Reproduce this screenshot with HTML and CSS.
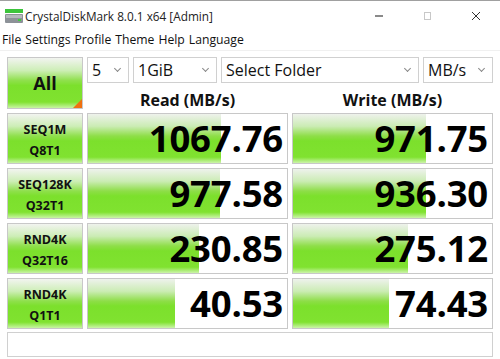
FILE: index.html
```html
<!DOCTYPE html>
<html lang="en">
  <head>
    <meta charset="UTF-8" />
    <meta name="viewport" content="width=device-width, initial-scale=1.0" />
    <title>CrystalDiskMark 8.0.1 x64 [Admin]</title>
    <link rel="stylesheet" href="styles.css">
  </head>
  <body>
    <div class="window">
      <div class="titlebar">
        <svg class="app-icon" width="18" height="14" viewBox="0 0 18 14">
          <rect x="0" y="0" width="18" height="4" fill="#3cc43c" />
          <rect x="0" y="5" width="18" height="9" rx="1" fill="#8d9298" />
          <rect x="1" y="6" width="16" height="3" fill="#b4b8bc" />
          <rect x="13" y="10" width="3" height="2" fill="#3cd03c" />
        </svg>
        <span class="title">CrystalDiskMark 8.0.1 x64 [Admin]</span>
        <div class="controls">
          <span class="ctl">
            <svg width="10" height="10" viewBox="0 0 10 10"><rect x="0" y="4" width="8" height="2" fill="#8a8a8a" /></svg>
          </span>
          <span class="ctl">
            <svg width="10" height="10" viewBox="0 0 10 10"><rect x="1.5" y="1.5" width="6" height="7" fill="none" stroke="#c8c8c8" /></svg>
          </span>
          <span class="ctl">
            <svg width="10" height="10" viewBox="0 0 10 10"><path d="M1 1 L9 9 M9 1 L1 9" stroke="#333" stroke-width="1" /></svg>
          </span>
        </div>
      </div>

      <div class="menubar">
        <span>File</span>
        <span>Settings</span>
        <span>Profile</span>
        <span>Theme</span>
        <span>Help</span>
        <span>Language</span>
      </div>

      <div class="main">
        <div class="top">
          <button class="all">All</button>
          <div class="right">
            <div class="combos">
              <div class="combo c-count">5</div>
              <div class="combo c-size">1GiB</div>
              <div class="combo c-folder">Select Folder</div>
              <div class="combo c-unit">MB/s</div>
            </div>
            <div class="heads">
              <div class="head">Read (MB/s)</div>
              <div class="head">Write (MB/s)</div>
            </div>
          </div>
        </div>

        <div class="row">
          <div class="label">SEQ1M<br />Q8T1</div>
          <div class="meter"><div class="fill" style="width: 67%"></div><span class="value">1067.76</span></div>
          <div class="meter"><div class="fill" style="width: 67%"></div><span class="value">971.75</span></div>
        </div>
        <div class="row">
          <div class="label">SEQ128K<br />Q32T1</div>
          <div class="meter"><div class="fill" style="width: 66.5%"></div><span class="value">977.58</span></div>
          <div class="meter"><div class="fill" style="width: 67%"></div><span class="value">936.30</span></div>
        </div>
        <div class="row">
          <div class="label">RND4K<br />Q32T16</div>
          <div class="meter"><div class="fill" style="width: 56%"></div><span class="value">230.85</span></div>
          <div class="meter"><div class="fill" style="width: 58%"></div><span class="value">275.12</span></div>
        </div>
        <div class="row">
          <div class="label">RND4K<br />Q1T1</div>
          <div class="meter"><div class="fill" style="width: 43.5%"></div><span class="value">40.53</span></div>
          <div class="meter"><div class="fill" style="width: 48%"></div><span class="value">74.43</span></div>
        </div>

        <div class="comment"></div>
      </div>
    </div>
  </body>
</html>
```

FILE: styles.css
```css
body {
  margin: 0;
  padding: 0;
  background: #fff;
  font-family: "Open Sans", "Noto Sans", sans-serif;
  color: #000;
}

.window {
  width: 500px;
  height: 359px;
  border-top: 1px solid #a0a0a0;
  box-sizing: border-box;
  overflow: hidden;
}

/* title bar */
.titlebar {
  height: 29px;
  display: flex;
  align-items: center;
}

.app-icon {
  margin-left: 5px;
  margin-right: 2px;
}

.title {
  font-size: 11.8px;
  color: #222;
}

.controls {
  margin-left: auto;
  display: flex;
}

.ctl {
  width: 48px;
  display: flex;
  justify-content: center;
}

/* menu */
.menubar {
  height: 20px;
  display: flex;
  gap: 4px;
  padding-left: 2px;
  font-size: 12.2px;
  line-height: 20px;
  color: #111;
  border-bottom: 1px solid #f0f0f0;
}

/* main area */
.main {
  padding: 6px 7px 0 7px;
}

.top {
  display: flex;
  gap: 4px;
}

.all {
  position: relative;
  width: 76px;
  height: 52px;
  border: 1px solid #c8c8c8;
  background: linear-gradient(#f2f4f0 0%, #cdeeb6 25%, #8fe04c 45%, #7ce02c 55%, #80e230 88%, #c8f4a4 100%);
  font-family: inherit;
  font-weight: bold;
  font-size: 18px;
  color: #111;
  padding: 0;
  cursor: pointer;
}

.all::after {
  content: "";
  position: absolute;
  right: 0;
  bottom: 0;
  border-style: solid;
  border-width: 0 0 9px 9px;
  border-color: transparent transparent #f07010 transparent;
}

.right {
  display: flex;
  flex-direction: column;
}

.combos {
  display: flex;
  gap: 4px;
  height: 26px;
}

.combo {
  position: relative;
  box-sizing: border-box;
  height: 26px;
  border: 1px solid #d0d0d0;
  background: #fff;
  font-size: 16px;
  line-height: 24px;
  padding-left: 4px;
  color: #111;
}

.combo::after {
  content: "";
  position: absolute;
  right: 8px;
  top: 8px;
  width: 4px;
  height: 4px;
  border-right: 1px solid #888;
  border-bottom: 1px solid #888;
  transform: rotate(45deg);
}

.c-count { width: 42px; }
.c-size { width: 84px; }
.c-folder { width: 198px; }
.c-unit { width: 70px; }

.heads {
  display: grid;
  grid-template-columns: 201px 201px;
  gap: 4px;
  height: 26px;
}

.head {
  text-align: center;
  font-weight: bold;
  font-size: 16px;
  line-height: 22px;
  padding-top: 6px;
  color: #111;
}

/* result rows */
.row {
  display: grid;
  grid-template-columns: 76px 201px 201px;
  gap: 4px;
  height: 51px;
  margin-top: 4px;
}

.label {
  box-sizing: border-box;
  border: 1px solid #c8c8c8;
  background: linear-gradient(#f2f4f0 0%, #cdeeb6 25%, #8fe04c 45%, #7ce02c 55%, #80e230 88%, #c8f4a4 100%);
  text-align: center;
  font-weight: bold;
  font-size: 12.5px;
  line-height: 21px;
  padding-top: 5px;
  color: #111;
}

.meter {
  position: relative;
  box-sizing: border-box;
  border: 1px solid #c8c8c8;
  background: #fff;
  display: flex;
  align-items: center;
  justify-content: flex-end;
}

.fill {
  position: absolute;
  left: 0;
  top: 0;
  bottom: 0;
  background: linear-gradient(#eef2ec 0%, #cbecb4 25%, #8ede48 45%, #7ce02c 55%, #80e230 88%, #ccf4aa 100%);
}

.value {
  position: relative;
  font-weight: bold;
  font-size: 36.5px;
  line-height: 1;
  padding-right: 4px;
  letter-spacing: -0.2px;
}

.comment {
  margin-top: 3px;
  height: 25px;
  box-sizing: border-box;
  border: 1px solid #d0d0d0;
  background: #fff;
}
```
